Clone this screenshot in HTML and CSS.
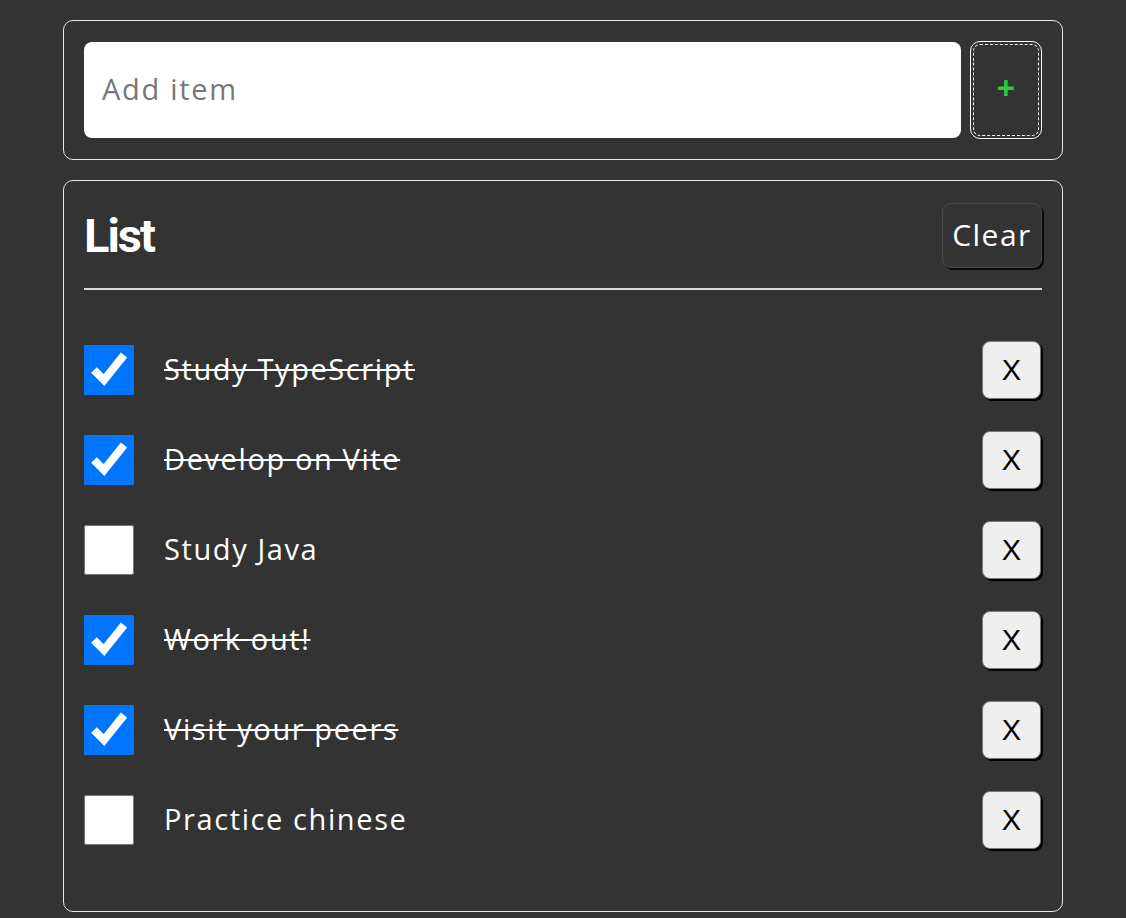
FILE: index.html
```html
<!DOCTYPE html>
<html lang="en">
<head>
<meta charset="utf-8">
<title>Todo List</title>
<link rel="stylesheet" href="styles.css">
</head>
<body>
<main class="app">
  <section class="card add-card">
    <input class="add-input" type="text" placeholder="Add item">
    <button class="add-btn" type="button">+</button>
  </section>
  <section class="card list-card">
    <header class="list-header">
      <h1 class="list-title">List</h1>
      <button class="clear-btn" type="button">Clear</button>
    </header>
    <ul class="items">
      <li class="item done">
        <input class="check" type="checkbox" checked>
        <span class="label">Study TypeScript</span>
        <button class="del-btn" type="button">X</button>
      </li>
      <li class="item done">
        <input class="check" type="checkbox" checked>
        <span class="label">Develop on Vite</span>
        <button class="del-btn" type="button">X</button>
      </li>
      <li class="item">
        <input class="check" type="checkbox">
        <span class="label">Study Java</span>
        <button class="del-btn" type="button">X</button>
      </li>
      <li class="item done">
        <input class="check" type="checkbox" checked>
        <span class="label">Work out!</span>
        <button class="del-btn" type="button">X</button>
      </li>
      <li class="item done">
        <input class="check" type="checkbox" checked>
        <span class="label">Visit your peers</span>
        <button class="del-btn" type="button">X</button>
      </li>
      <li class="item">
        <input class="check" type="checkbox">
        <span class="label">Practice chinese</span>
        <button class="del-btn" type="button">X</button>
      </li>
    </ul>
  </section>
</main>
</body>
</html>
```

FILE: styles.css
```css
* { box-sizing: border-box; }

body {
  margin: 0;
  background: #333333;
  color: #ffffff;
  font-family: "Open Sans", "Noto Sans", sans-serif;
}

.app {
  width: 1000px;
  margin: 20px auto 0;
  display: flex;
  flex-direction: column;
  gap: 20px;
}

.card {
  border: 1px solid #e6e6e6;
  border-radius: 10px;
  padding: 20px;
}

.add-card {
  display: flex;
  align-items: center;
  gap: 9px;
  height: 140px;
}

.add-input {
  flex: 1;
  height: 96px;
  border: none;
  border-radius: 8px;
  background: #ffffff;
  padding: 0 18px 3px;
  font-family: "Open Sans", sans-serif;
  font-size: 29px;
  letter-spacing: 1.7px;
  color: #222;
  outline: none;
}

.add-input::placeholder { color: #777777; }

.add-btn {
  width: 72px;
  height: 98px;
  background: #333333;
  border: 1px solid #ffffff;
  border-radius: 10px;
  outline: 1px dashed #ffffff;
  outline-offset: -4px;
  color: #2ecc40;
  font-family: "Open Sans", sans-serif;
  font-weight: 700;
  font-size: 32px;
  line-height: 1;
  padding: 0 0 4px;
}

.list-card {
  height: 732px;
}

.list-header {
  display: flex;
  align-items: center;
  justify-content: space-between;
  padding: 2px 0 20px;
  border-bottom: 2px solid #d9d9d9;
}

.list-title {
  margin: 0;
  font-family: Roboto, sans-serif;
  font-weight: 700;
  font-size: 47px;
  letter-spacing: -2px;
  color: #ffffff;
  line-height: 1;
}

.clear-btn {
  width: 100px;
  height: 65px;
  background: #333333;
  color: #ffffff;
  border: 1px solid #4a4a4a;
  border-radius: 9px;
  box-shadow: 2px 2px 0 #080808;
  font-family: "Open Sans", sans-serif;
  font-size: 30px;
  letter-spacing: 1.5px;
  padding: 0 0 3px;
}

.items {
  list-style: none;
  margin: 0;
  padding: 51px 0 0;
  display: flex;
  flex-direction: column;
  gap: 32px;
}

.item {
  display: flex;
  align-items: center;
  height: 58px;
}

.check {
  width: 50px;
  height: 50px;
  margin: 0 30px 0 0;
  flex: none;
}

.label {
  flex: 1;
  font-size: 29px;
  letter-spacing: 1.6px;
  padding-bottom: 4px;
  color: #ffffff;
}

.item.done .label {
  text-decoration: line-through;
  text-decoration-thickness: 2px;
}

.del-btn {
  width: 59px;
  height: 58px;
  background: #efefef;
  color: #000000;
  border: 1px solid #7a7a7a;
  border-radius: 8px;
  box-shadow: 2px 2px 0 #000000;
  font-family: "Liberation Sans", Arial, sans-serif;
  font-size: 29px;
  padding: 0;
  margin-right: 1px;
}
```
